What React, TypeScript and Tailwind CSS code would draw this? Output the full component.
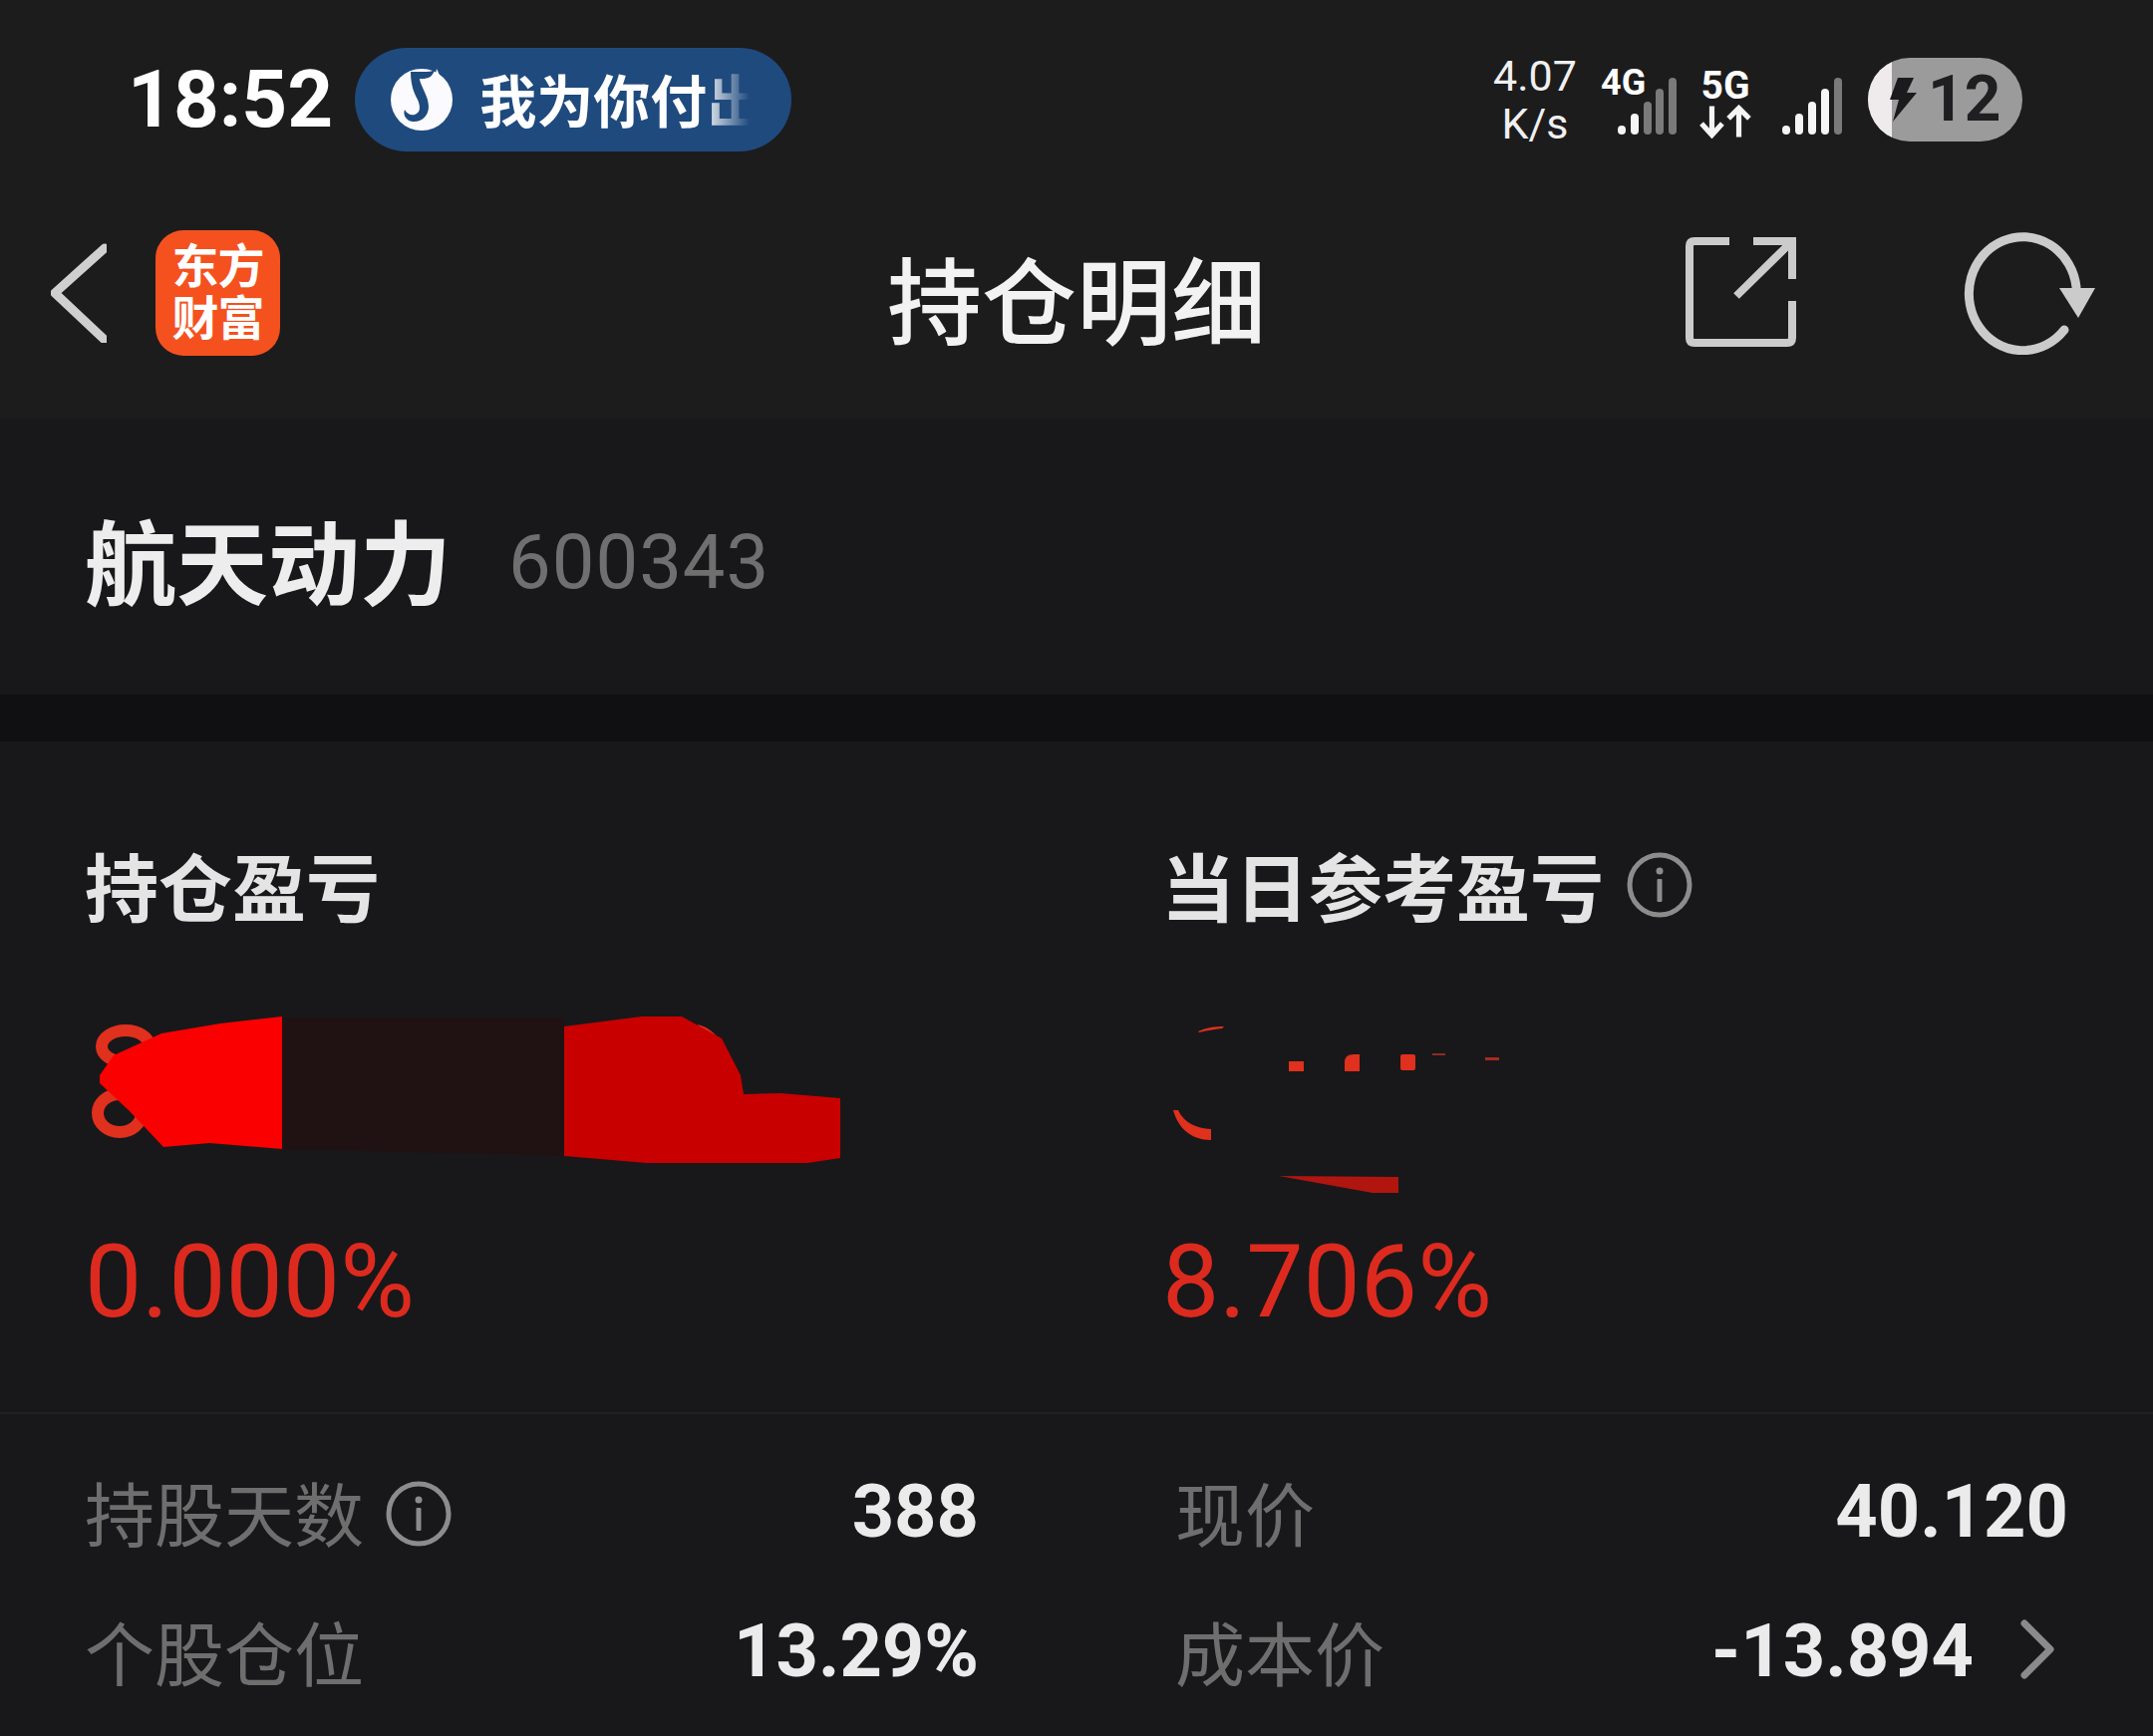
function Bars({ lit, x }: { lit: number; x: number[] }) {
  const tops = [125, 113, 101, 88, 77];
  return (
    <svg width="64" height="64" viewBox={`${x[0] - 2} 74 64 64`} className="block">
      {x.map((bx, i) => (
        <rect key={i} x={bx} y={tops[i]} width="8" height={134 - tops[i]} rx="4" fill={i < lit ? "#f5f5f5" : "#7a7a7a"} />
      ))}
    </svg>
  );
}

function InfoIcon() {
  return (
    <svg width="68" height="68" viewBox="0 0 68 68" fill="none" className="block shrink-0">
      <circle cx="34" cy="34" r="30" stroke="#8c8c8c" strokeWidth="5" />
      <circle cx="34" cy="20" r="3.5" fill="#8c8c8c" />
      <rect x="31.5" y="28" width="5" height="23" rx="1" fill="#8c8c8c" />
    </svg>
  );
}

function StatRow({ label, value, info }: { label: string; value: string; info?: boolean }) {
  return (
    <div className="flex h-[140px] items-center justify-between">
      <div className="flex items-center gap-[21px]">
        <span className="text-[70px] leading-[80px] text-[#6e6e6e] mt-[8px]">{label}</span>
        {info && <InfoIcon />}
      </div>
      <span className="text-[74px] leading-[80px] font-bold text-[#ebebeb] mt-[-4px]">{value}</span>
    </div>
  );
}

export default function App() {
  return (
    <div className="w-[2160px] h-[1742px] overflow-hidden bg-[#18181a] font-['Roboto','Noto_Sans_CJK_SC',sans-serif]">
      {/* status bar */}
      <div className="h-[200px] bg-[#1c1c1d] flex items-center justify-between pl-[128px] pr-[131px]">
        <div className="flex items-center gap-[22px]">
          <span className="text-[80px] leading-[90px] font-bold text-white">18:52</span>
          <div className="w-[438px] h-[104px] rounded-full bg-[#1f4a7e] flex items-center pl-[36px] gap-[27px]">
            <svg width="62" height="62" viewBox="0 0 62 62" className="block shrink-0">
              <circle cx="31" cy="31" r="31" fill="#fbfbff" />
              <path d="M20 3 L36 3 C40 3 42 2 44 1 C42 8 38 10 31 10 L29 10 C29 16 38 27 38 38 C38 48 30 54 22 53 C15 52 12 46 14 41 C16 45 20 47 24 46 C30 44 30 38 27 31 C24 25 20 18 20 3 Z" fill="#1f4a7e" />
              <path d="M46 0 C45 8 40 13 37 16 L44 30 C50 22 52 10 46 0 Z" fill="#fbfbff" />
            </svg>
            <div className="w-[271px] mt-[8px] overflow-hidden whitespace-nowrap text-[57px] leading-[70px] font-bold text-white [mask-image:linear-gradient(to_right,#000_82%,transparent_100%)]">
              我为你付出
            </div>
          </div>
        </div>
        <div className="flex items-center">
          <div className="w-[90px] flex flex-col items-center text-[#f0f0f0] text-[43px] leading-[48px] mr-[20px] ml-[2px]">
            <span>4.07</span>
            <span>K/s</span>
          </div>
          <div className="relative w-[80px] h-[64px] mt-[14px]">
            <span className="absolute left-[1px] top-[-10px] text-[36px] leading-[36px] font-bold text-white">4G</span>
            <div className="absolute left-[16px] top-0">
              <Bars lit={2} x={[1625, 1638, 1651, 1663, 1676]} />
            </div>
          </div>
          <div className="w-[50px] ml-[21px] flex flex-col items-center">
            <span className="text-[39px] leading-[40px] font-bold text-white mt-[5px]">5G</span>
            <svg width="52" height="34" viewBox="0 0 50 32" fill="none" stroke="#f5f5f5" strokeWidth="5" className="block shrink-0 mt-[-1px]">
              <path d="M12 1V28M2 18L12 29L22 18" />
              <path d="M38 31V3M28 13L38 3L48 13" />
            </svg>
          </div>
          <div className="ml-[30px] mt-[14px]">
            <Bars lit={4} x={[1789, 1802, 1815, 1828, 1841]} />
          </div>
          <div className="ml-[24px] w-[155px] h-[84px] rounded-full overflow-hidden bg-[#9b9b9b] flex items-center">
            <div className="w-[24px] h-full bg-[#efeaec] shrink-0" />
            <svg width="28" height="44" viewBox="0 0 28 44" className="block shrink-0 ml-[-2px]">
              <path d="M8 0H24L17 15H27L3 44L9 22H0Z" fill="#1b1b1d" />
            </svg>
            <span className="ml-[10px] text-[64px] leading-[70px] font-bold text-[#1f1f21]">12</span>
          </div>
        </div>
      </div>

      {/* nav */}
      <div className="relative h-[220px] bg-[#1c1c1d] flex items-center justify-between pl-[51px] pr-[53px]">
        <div className="flex items-center gap-[49px] mt-[-32px]">
          <svg width="56" height="100" viewBox="51 243 56 100" fill="none" stroke="#cfcfcf" strokeWidth="9" strokeLinecap="round" strokeLinejoin="round" className="block">
            <path d="M105 248L55 293L105 340" />
          </svg>
          <div className="w-[125px] h-[126px] rounded-[28px] bg-[#f4511f] flex flex-col items-center justify-center text-white font-bold text-[47px] leading-[52px] tracking-[-1px]">
            <span>东方</span>
            <span>财富</span>
          </div>
        </div>
        <div className="absolute left-0 right-0 top-[59px] text-center text-[95px] leading-[96px] font-medium text-[#f2f2f2]">持仓明细</div>
        <div className="flex items-center gap-[160px] mt-[-32px]">
          <svg width="120" height="120" viewBox="1687 234 120 120" fill="none" stroke="#cbcbcb" strokeWidth="8" className="block">
            <path d="M1735 242H1700Q1695 242 1695 247V339Q1695 344 1700 344H1793Q1798 344 1798 339V302" />
            <path d="M1759 242H1798V280M1742 297L1798 242" />
          </svg>
          <svg width="140" height="124" viewBox="1968 232 140 124" fill="none" className="block">
            <path d="M2072 331A54 57 0 1 1 2084 288" stroke="#cbcbcb" strokeWidth="9" strokeLinecap="round" />
            <path d="M2067 289H2103L2086 319Z" fill="#cbcbcb" />
          </svg>
        </div>
      </div>

      {/* stock name */}
      <div className="h-[277px] flex items-center pl-[85px] gap-[57px]">
        <span className="text-[92px] leading-[100px] font-bold text-[#ededed] mt-[20px]">航天动力</span>
        <span className="text-[76px] leading-[90px] text-[#6f6f6f] mt-[10px] tracking-[1px]">600343</span>
      </div>
      <div className="h-[47px] bg-[#101012]" />

      {/* P&L */}
      <div className="h-[675px] border-b-2 border-[#212123] grid grid-cols-[1083px_1fr] pl-[85px] pt-[108px]">
        <div>
          <div className="h-[84px] flex items-center text-[74px] leading-[84px] font-bold text-[#e4e4e4]">持仓盈亏</div>
          <svg width="1000" height="190" viewBox="85 1010 1000 190" fill="none" className="block mt-[76px]">
            <ellipse cx="126" cy="1048" rx="24" ry="16" stroke="#e0301e" strokeWidth="12" />
            <ellipse cx="120" cy="1115" rx="22" ry="19" stroke="#e0301e" strokeWidth="12" />
            <path d="M381 1030C390 1026 400 1026 408 1030Z" fill="#e0301e" />
            <path d="M459 1036C465 1024 497 1022 503 1036Z" fill="#e0301e" />
            <path d="M700 1026C716 1030 728 1045 730 1064L722 1064Z" fill="#e0301e" />
            <path d="M283 1019H566V1158L283 1151Z" fill="#201212" />
            <path d="M100 1077L114 1057L162 1035L221 1025L283 1018V1151L210 1145L164 1149L130 1113L100 1085Z" fill="#fb0000" />
            <path d="M566 1028L644 1018H684L724 1040L743 1077L746 1096L783 1095L843 1100V1160L810 1165H649L566 1158Z" fill="#c90000" />
          </svg>
          <div className="mt-[26px] text-[102px] leading-[116px] text-[#dd2a1f]">0.000%</div>
        </div>
        <div>
          <div className="h-[84px] flex items-center text-[74px] leading-[84px] font-bold text-[#e4e4e4] ml-[-3px]">
            当日参考盈亏
            <span className="ml-[22px] mt-[-13px]">
              <InfoIcon />
            </span>
          </div>
          <svg width="800" height="190" viewBox="1168 1010 800 190" className="block mt-[76px]">
            <path d="M1202 1033C1210 1029 1220 1028 1228 1028L1226 1030C1218 1031 1210 1032 1203 1034Z" fill="#e0301e" />
            <path d="M1177 1112L1182 1112C1188 1125 1200 1130 1215 1131V1142C1195 1142 1182 1130 1177 1112Z" fill="#e0301e" />
            <rect x="1293" y="1063" width="15" height="10" fill="#e0301e" />
            <path d="M1349 1073V1064Q1349 1056 1358 1056H1364V1073Z" fill="#e0301e" />
            <rect x="1405" y="1056" width="15" height="16" rx="2" fill="#e0301e" />
            <rect x="1437" y="1055" width="13" height="2" fill="#8f2a20" />
            <rect x="1490" y="1059" width="14" height="3" fill="#a82a20" />
            <path d="M1283 1178L1403 1179V1195H1377Z" fill="#b01510" />
          </svg>
          <div className="mt-[26px] ml-[-2px] text-[102px] leading-[116px] text-[#dd2a1f]">8.706%</div>
        </div>
      </div>

      {/* stats */}
      <div className="grid grid-cols-[897px_896px] gap-x-[197px] pl-[85px] pt-[30px]">
        <StatRow label="持股天数" value="388" info />
        <StatRow label="现价" value="40.120" />
        <StatRow label="个股仓位" value="13.29%" />
        <div className="flex h-[140px] items-center justify-between">
          <span className="text-[70px] leading-[80px] text-[#6e6e6e] mt-[8px]">成本价</span>
          <div className="flex items-center gap-[46px] mr-[13px]">
            <span className="text-[74px] leading-[80px] font-bold text-[#ebebeb] mt-[-4px]">-13.894</span>
            <svg width="36" height="62" viewBox="0 0 36 62" fill="none" stroke="#8a8a8a" strokeWidth="7" strokeLinecap="round" strokeLinejoin="round" className="block mt-[-8px]">
              <path d="M5 5L31 31L5 57" />
            </svg>
          </div>
        </div>
      </div>
    </div>
  );
}
